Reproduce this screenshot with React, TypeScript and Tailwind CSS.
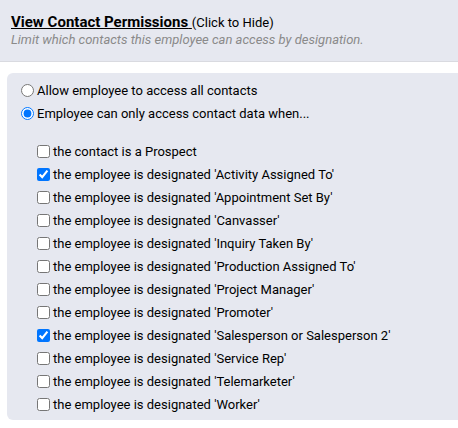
import React, { useState } from 'react'

const designations = [
    'Activity Assigned To',
    'Appointment Set By',
    'Canvasser',
    'Inquiry Taken By',
    'Production Assigned To',
    'Project Manager',
    'Promoter',
    'Salesperson or Salesperson 2',
    'Service Rep',
    'Telemarketer',
    'Worker',
]

const App: React.FC = () => {
    const [mode, setMode] = useState<'all' | 'limited'>('limited')
    const [checked, setChecked] = useState<Record<string, boolean>>({
        'Activity Assigned To': true,
        'Salesperson or Salesperson 2': true,
    })

    const toggle = (key: string) => {
        setChecked((prev) => ({ ...prev, [key]: !prev[key] }))
    }

    return (
        <div className="w-[458px] h-[428px] bg-white font-['Roboto',sans-serif] text-[13px] text-black overflow-hidden">
            <div className="h-[62px] bg-[#e6e8f0] border-b border-[#d9dae0] pl-[11px] pt-[13px]">
                <div className="leading-[18px]">
                    <span className="text-[15px] font-bold underline">
                        View Contact Permissions{' '}
                    </span>
                    <span className="text-[13px]">(Click to Hide)</span>
                </div>
                <div className="text-[13px] italic text-[#8a8a8a] leading-[16px]">
                    Limit which contacts this employee can access by designation.
                </div>
            </div>

            <div className="ml-[7px] mt-[11px] h-[347px] rounded-l-md bg-[#e6e8f0] pt-[6px]">
                <label className="flex h-[23px] items-center pl-[14px]">
                    <input
                        type="radio"
                        className="m-0 mr-[3px] h-[13px] w-[13px]"
                        checked={mode === 'all'}
                        onChange={() => setMode('all')}
                    />
                    Allow employee to access all contacts
                </label>
                <label className="flex h-[23px] items-center pl-[14px]">
                    <input
                        type="radio"
                        className="m-0 mr-[3px] h-[13px] w-[13px]"
                        checked={mode === 'limited'}
                        onChange={() => setMode('limited')}
                    />
                    Employee can only access contact data when...
                </label>

                <div className="mt-[15px]">
                    <label className="flex h-[23px] items-center pl-[30px]">
                        <input
                            type="checkbox"
                            className="m-0 mr-[3px] h-[13px] w-[13px]"
                            checked={!!checked['Prospect']}
                            onChange={() => toggle('Prospect')}
                        />
                        the contact is a Prospect
                    </label>
                    {designations.map((d) => (
                        <label
                            key={d}
                            className="flex h-[23px] items-center pl-[30px]"
                        >
                            <input
                                type="checkbox"
                                className="m-0 mr-[3px] h-[13px] w-[13px]"
                                checked={!!checked[d]}
                                onChange={() => toggle(d)}
                            />
                            the employee is designated '{d}'
                        </label>
                    ))}
                </div>
            </div>
        </div>
    )
}

export default App
